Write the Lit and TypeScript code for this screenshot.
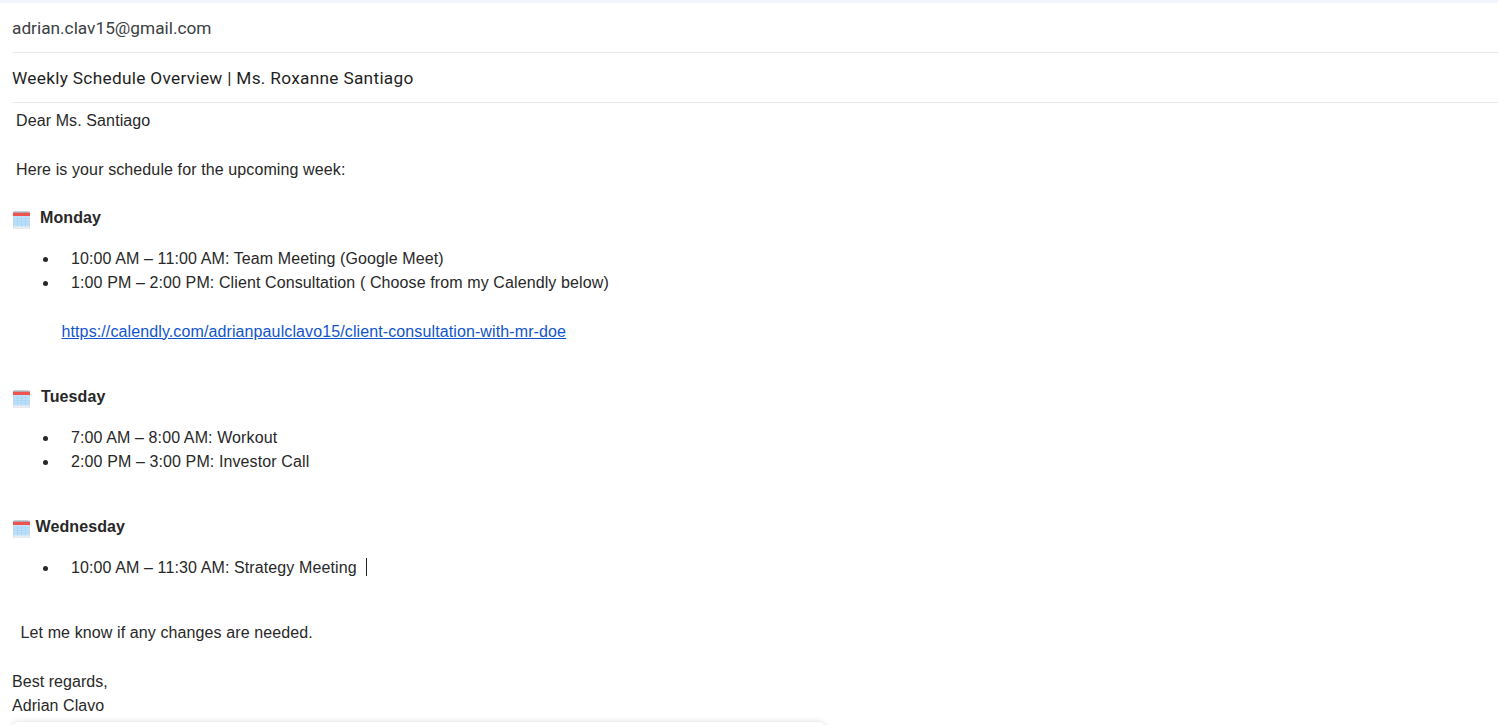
import { LitElement, html, css, svg } from "lit";
import { customElement } from "lit/decorators.js";

const cal = svg`<svg class="cal" width="20" height="20" viewBox="0 0 20 20" aria-hidden="true">
  <rect x="1" y="1.500" width="17" height="17" fill="#cfd4d8"/>
  <rect x="1.500" y="6" width="16" height="12" fill="#bfe1fa"/>
  <rect x="1" y="2.500" width="17" height="3.500" fill="#ef5350"/>
  <path d="M2.500 2h14" stroke="#8fb6c0" stroke-width="1.600" stroke-dasharray="1.200 .8"/>
  <path d="M1.500 9h16M1.500 11.500h16M1.500 14h16M5.500 7v10M9.500 7v10M13.500 7v10" stroke="#a4d3f5" stroke-width=".7"/>
  <rect x="1.500" y="16.500" width="16" height="1.500" fill="#e8eef3"/>
</svg>`;

@customElement("app-root")
export class AppRoot extends LitElement {
  static styles = css`
    :host { display: block; width: 1498px; height: 725px; overflow: hidden; position: relative; background: #fff; font-family: "Liberation Sans", Arial, sans-serif; color: #282828; }
    .top { height: 3px; background: #f2f6fc; }
    .head { margin-left: 12px; font-family: Roboto, sans-serif; font-size: 17.25px; display: flex; align-items: center; border-bottom: 1px solid #e8eaed; }
    .from { height: 49px; color: #3c4043; }
    .subj { height: 49px; color: #1f1f1f; letter-spacing: 0.3px; }
    .body { padding-top: 6px; font-size: 16px; line-height: 24.4px; letter-spacing: 0.11px; }
    .line { height: 24.4px; white-space: pre; }
    .in16 { padding-left: 16px; }
    .in20 { padding-left: 20.5px; }
    .in12 { padding-left: 12px; letter-spacing: 0.05px; }
    .gap1 { margin-top: 24.4px; }
    .day { display: flex; align-items: center; padding-left: 12px; font-weight: 700; margin-top: 24px; letter-spacing: 0.1px; }
    .cal { flex: none; margin-top: 3px; }
    .t8 { margin-left: 8px; }
    .t9 { margin-left: 9px; }
    .t3 { margin-left: 3.500px; }
    ul { margin: 16px 0 0; padding: 0 0 0 59px; list-style: disc; }
    li { height: 24.4px; padding-left: 12px; }
    .link { padding-left: 61.5px; margin-top: 24.4px; }
    a { color: #1155cc; text-decoration: underline; }
    .d2 { margin-top: 41px; }
    .d3 { margin-top: 41px; }
    .last { margin-top: 41px; }
    .caret { display: inline-block; width: 1px; height: 18px; background: #222; margin-left: 9px; vertical-align: -3px; }
    .sheet { position: absolute; left: 12px; top: 722px; width: 813px; height: 20px; background: #fff; border-radius: 6px 6px 0 0; box-shadow: 0 0 6px rgba(0,0,0,.14); }
  `;
  render() {
    return html`
      <div class="top"></div>
      <div class="head from">adrian.clav15@gmail.com</div>
      <div class="head subj">Weekly Schedule Overview | Ms. Roxanne Santiago</div>
      <div class="body">
        <div class="line in16">Dear Ms. Santiago</div>
        <div class="line gap1 in16">Here is your schedule for the upcoming week:</div>
        <div class="day">${cal}<span class="t8">Monday</span></div>
        <ul>
          <li>10:00 AM – 11:00 AM: Team Meeting (Google Meet)</li>
          <li>1:00 PM – 2:00 PM: Client Consultation ( Choose from my Calendly below)</li>
        </ul>
        <div class="line link"><a href="#">https://calendly.com/adrianpaulclavo15/client-consultation-with-mr-doe</a></div>
        <div class="day d2">${cal}<span class="t9">Tuesday</span></div>
        <ul>
          <li>7:00 AM – 8:00 AM: Workout</li>
          <li>2:00 PM – 3:00 PM: Investor Call</li>
        </ul>
        <div class="day d3">${cal}<span class="t3">Wednesday</span></div>
        <ul>
          <li>10:00 AM – 11:30 AM: Strategy Meeting<span class="caret"></span></li>
        </ul>
        <div class="line last in20">Let me know if any changes are needed.</div>
        <div class="line gap1 in12">Best regards,</div>
        <div class="line in12">Adrian Clavo</div>
      </div>
      <div class="sheet"></div>
    `;
  }
}
